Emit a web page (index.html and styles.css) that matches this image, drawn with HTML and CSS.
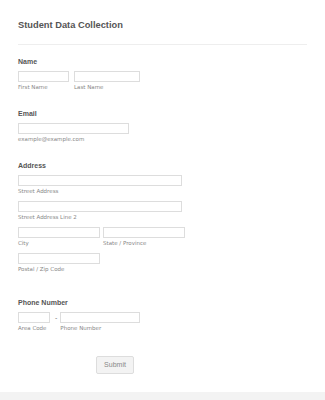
FILE: index.html
```html
<!DOCTYPE html>
<html lang="en">
<head>
    <meta charset="UTF-8">
    <title>Student Data Collection</title>
    <link rel="stylesheet" href="styles.css">
</head>
<body>
<form class="form">
    <div class="header">
        <h1 class="title">Student Data Collection</h1>
    </div>

    <div class="field">
        <label class="label">Name</label>
        <div class="row">
            <div class="part">
                <input class="input w-first" type="text">
                <span class="sub">First Name</span>
            </div>
            <div class="part">
                <input class="input w-last" type="text">
                <span class="sub">Last Name</span>
            </div>
        </div>
    </div>

    <div class="field">
        <label class="label">Email</label>
        <input class="input w-email" type="email">
        <span class="sub">example@example.com</span>
    </div>

    <div class="field field-address">
        <label class="label">Address</label>
        <div class="part line">
            <input class="input w-street" type="text">
            <span class="sub">Street Address</span>
        </div>
        <div class="part line">
            <input class="input w-street" type="text">
            <span class="sub">Street Address Line 2</span>
        </div>
        <div class="row row-tight line">
            <div class="part">
                <input class="input w-half" type="text">
                <span class="sub">City</span>
            </div>
            <div class="part">
                <input class="input w-half" type="text">
                <span class="sub">State / Province</span>
            </div>
        </div>
        <div class="part line">
            <input class="input w-half" type="text">
            <span class="sub">Postal / Zip Code</span>
        </div>
    </div>

    <div class="field">
        <label class="label">Phone Number</label>
        <div class="row">
            <div class="part">
                <input class="input w-area" type="text">
                <span class="sub">Area Code</span>
            </div>
            <span class="dash">-</span>
            <div class="part">
                <input class="input w-phone" type="text">
                <span class="sub">Phone Number</span>
            </div>
        </div>
    </div>

    <div class="actions">
        <button class="submit" type="button">Submit</button>
    </div>
</form>
<div class="footer"></div>
</body>
</html>
```

FILE: styles.css
```css
*{
    margin: 0;
    padding: 0;
    box-sizing: border-box;
}
body{
    background: #fff;
    font-family: "Liberation Sans", Arial, sans-serif;
    color: #555;
}
.form{
    padding: 20px 18px 0;
}
.header{
    width: 289px;
    padding-bottom: 14px;
    border-bottom: 1px solid #eee;
    margin-bottom: 13px;
}
.title{
    font-size: 9.3px;
    line-height: 10px;
    font-weight: bold;
    color: #555;
}
.field{
    margin-bottom: 19px;
}
.field-address{
    margin-bottom: 26px;
}
.label{
    display: block;
    font-size: 7px;
    line-height: 8px;
    font-weight: bold;
    color: #555;
    margin-bottom: 5px;
}
.row{
    display: flex;
    align-items: flex-start;
}
.part{
    display: flex;
    flex-direction: column;
}
.row .part + .part{
    margin-left: 5px;
}
.row-tight .part + .part{
    margin-left: 3px;
}
.line + .line{
    margin-top: 6px;
}
.input{
    display: block;
    height: 11px;
    border: 1px solid #ddd;
    background: #fff;
    outline: none;
}
.w-first{ width: 51px; }
.w-last{ width: 66px; }
.w-email{ width: 111px; }
.w-street{ width: 164px; }
.w-half{ width: 82px; }
.w-area{ width: 32px; }
.w-phone{ width: 80px; }
.sub{
    display: block;
    font-family: "DejaVu Sans", Verdana, sans-serif;
    font-size: 5.5px;
    line-height: 7px;
    margin-top: 2px;
    color: #888;
}
.dash{
    font-size: 7px;
    line-height: 11px;
    color: #777;
    margin: 0 3px 0 5px;
}
.row .dash + .part{
    margin-left: 0;
}
.actions{
    padding: 2px 0 0 78px;
}
.submit{
    width: 38px;
    height: 18px;
    border: 1px solid #ddd;
    border-radius: 2px;
    background: #f3f3f3;
    font-family: "Liberation Sans", Arial, sans-serif;
    font-size: 7px;
    color: #888;
}
.footer{
    margin-top: 18px;
    height: 8px;
    background: #f3f3f3;
}
```
